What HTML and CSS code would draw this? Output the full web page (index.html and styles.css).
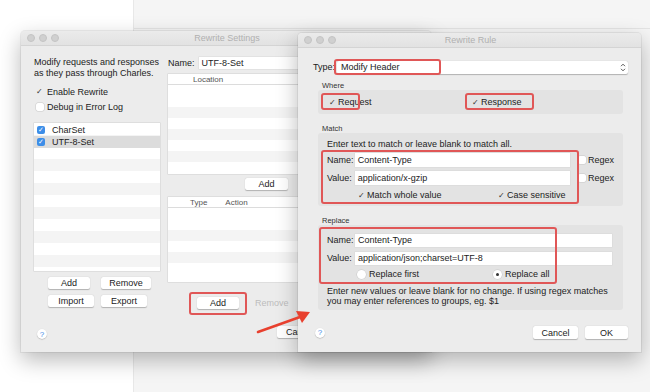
FILE: index.html
```html
<!DOCTYPE html>
<html lang="en">
<head>
    <meta charset="UTF-8">
    <title>Rewrite</title>
    <link rel="stylesheet" href="styles.css">
</head>
<body>
<div class="desk">
    <div class="backdrop"></div>

    <!-- Rewrite Settings window -->
    <div class="win settings">
        <div class="titlebar">
            <div class="lights"><i></i><i></i><i></i></div>
            <div class="title">Rewrite Settings</div>
        </div>
        <div class="set-body">
            <div class="set-left">
                <p class="desc">Modify requests and responses<br>as they pass through Charles.</p>
                <div class="check-row"><span class="tick">&#10003;</span>Enable Rewrite</div>
                <div class="check-row"><span class="box"></span>Debug in Error Log</div>
                <ul class="sets">
                    <li><span class="bluebox">&#10003;</span>CharSet</li>
                    <li class="sel"><span class="bluebox">&#10003;</span>UTF-8-Set</li>
                    <li></li><li></li><li></li><li></li><li></li><li></li><li></li><li></li><li></li><li></li>
                </ul>
                <div class="btn-grid">
                    <span class="btn w42">Add</span>
                    <span class="btn w50">Remove</span>
                    <span class="btn w46">Import</span>
                    <span class="btn w46">Export</span>
                </div>
                <span class="help">?</span>
            </div>
            <div class="set-right">
                <div class="name-row"><label>Name:</label><span class="field">UTF-8-Set</span></div>
                <div class="table t-loc">
                    <div class="thead"><span class="th-loc">Location</span></div>
                    <div class="rows"><i></i><i></i><i></i><i></i><i></i><i></i><i></i><i></i></div>
                </div>
                <div class="add-row"><span class="btn w43">Add</span></div>
                <div class="table t-act">
                    <div class="thead"><span class="th-type">Type</span><span class="th-act">Action</span></div>
                    <div class="rows"><i></i><i></i><i></i><i></i><i></i><i></i></div>
                </div>
                <div class="act-btns">
                    <span class="btn w42">Add</span>
                    <span class="btn-off">Remove</span>
                </div>
                <div class="foot-right"><span class="btn w46">Cancel</span></div>
            </div>
        </div>
    </div>

    <!-- Rewrite Rule dialog -->
    <div class="win rule">
        <div class="titlebar">
            <div class="lights"><i></i><i></i><i></i></div>
            <div class="title">Rewrite Rule</div>
        </div>
        <div class="rule-body">
            <div class="type-row">
                <label>Type:</label>
                <div class="select">Modify Header<span class="updown">
                    <svg width="6" height="9" viewBox="0 0 6 9"><path d="M1 3.2 L3 1.2 L5 3.2 M1 5.8 L3 7.8 L5 5.8" fill="none" stroke="#444" stroke-width="0.9"/></svg>
                </span></div>
            </div>

            <div class="grp-label">Where</div>
            <div class="group where">
                <div class="where-item"><span class="tick">&#10003;</span>Request</div>
                <div class="where-item"><span class="tick">&#10003;</span>Response</div>
            </div>

            <div class="grp-label">Match</div>
            <div class="group match">
                <p class="note">Enter text to match or leave blank to match all.</p>
                <div class="frow"><label>Name:</label><span class="field f-match">Content-Type</span><span class="box"></span><span>Regex</span></div>
                <div class="frow"><label>Value:</label><span class="field f-match">application/x-gzip</span><span class="box"></span><span>Regex</span></div>
                <div class="opt-row">
                    <span class="opt o1"><span class="tick">&#10003;</span>Match whole value</span>
                    <span class="opt"><span class="tick">&#10003;</span>Case sensitive</span>
                </div>
            </div>

            <div class="grp-label">Replace</div>
            <div class="group replace">
                <div class="frow"><label>Name:</label><span class="field f-rep">Content-Type</span></div>
                <div class="frow"><label>Value:</label><span class="field f-rep">application/json;charset=UTF-8</span></div>
                <div class="opt-row radios">
                    <span class="opt o1"><span class="radio"></span>Replace first</span>
                    <span class="opt"><span class="radio on"></span>Replace all</span>
                </div>
                <p class="note">Enter new values or leave blank for no change. If using regex matches<br>you may enter references to groups, eg. $1</p>
            </div>

            <div class="rule-foot">
                <span class="help">?</span>
                <div class="foot-btns">
                    <span class="btn w45">Cancel</span>
                    <span class="btn w43">OK</span>
                </div>
            </div>
        </div>
    </div>

    <!-- red annotations -->
    <div class="mark m-add"></div>
    <div class="mark m-type"></div>
    <div class="mark m-req"></div>
    <div class="mark m-resp"></div>
    <div class="mark m-match"></div>
    <div class="mark m-rep"></div>
    <svg class="arrow" width="60" height="30" viewBox="0 0 60 30">
        <path d="M2 26 L44 11" stroke="#e8402e" stroke-width="2.6" stroke-linecap="round"/>
        <path d="M54 6 L40 5 L46 17 Z" fill="#e8402e"/>
    </svg>
</div>
</body>
</html>
```

FILE: styles.css
```css
* {
    margin: 0;
    padding: 0;
    box-sizing: border-box;
}

body {
    width: 650px;
    height: 392px;
    background: #fff;
    font-family: "Liberation Sans", Arial, sans-serif;
    font-size: 9px;
    color: #222;
    overflow: hidden;
}

ul {
    list-style: none;
}

.desk {
    position: relative;
    width: 650px;
    height: 392px;
}

.backdrop {
    position: absolute;
    left: 133px;
    top: 0;
    right: 0;
    bottom: 0;
    background: #f5f5f5;
    border-left: 1px solid #e8e8e8;
}

.backdrop::before {
    content: "";
    display: block;
    height: 28px;
    border-bottom: 1px solid #e4e4e4;
}

/* windows */
.win {
    position: absolute;
    background: #ececec;
    border-radius: 4px 4px 0 0;
    box-shadow: 0 8px 22px rgba(0, 0, 0, 0.28), 0 0 0 1px rgba(0, 0, 0, 0.06);
    overflow: hidden;
}

.settings {
    left: 21px;
    top: 31px;
    width: 410px;
    height: 321px;
}

.rule {
    left: 298px;
    top: 33px;
    width: 343px;
    height: 319px;
}

.titlebar {
    height: 15px;
    background: linear-gradient(#ebebeb, #e2e2e2);
    border-bottom: 1px solid #d4d4d4;
    display: flex;
    align-items: center;
    position: relative;
}

.lights {
    display: flex;
    gap: 4px;
    padding-left: 6px;
}

.lights i {
    width: 8px;
    height: 8px;
    border-radius: 50%;
    background: #d0d0d0;
    border: 1px solid #c4c4c4;
}

.title {
    flex: 1;
    text-align: center;
    color: #b0b0b0;
    font-size: 9px;
    margin-left: -36px;
}

/* buttons */
.btn {
    display: inline-flex;
    align-items: center;
    justify-content: center;
    height: 12px;
    background: #fff;
    border-radius: 2px;
    box-shadow: 0 0.5px 1px rgba(0, 0, 0, 0.25);
    font-size: 9px;
}

.w42 { width: 42px; }
.w43 { width: 43px; }
.w45 { width: 45px; }
.w46 { width: 46px; }
.w50 { width: 50px; }

.btn-off {
    color: #bcbcbc;
}

.help {
    width: 10px;
    height: 10px;
    border-radius: 50%;
    background: #fff;
    box-shadow: 0 0.5px 1px rgba(0, 0, 0, 0.3);
    color: #3d8ee8;
    font-size: 8px;
    display: flex;
    align-items: center;
    justify-content: center;
}

.tick {
    width: 9px;
    font-size: 8px;
    color: #333;
    display: inline-block;
}

.box {
    width: 8px;
    height: 8px;
    background: #fff;
    border-radius: 2px;
    box-shadow: 0 0 0 0.5px #c8c8c8;
    display: inline-block;
}

/* settings window */
.set-body {
    display: flex;
    gap: 8px;
    padding: 11px 0 0 13px;
}

.set-left {
    width: 126px;
    display: flex;
    flex-direction: column;
}

.desc {
    line-height: 11px;
}

.check-row {
    display: flex;
    align-items: center;
    gap: 2px;
    height: 15px;
    padding-left: 2px;
}

.check-row:nth-of-type(1) {
    margin-top: 5px;
}

.check-row .box {
    margin-right: 1px;
}

.sets {
    margin-top: 9px;
    height: 148px;
    background: repeating-linear-gradient(#fff 0 12px, #f4f4f4 12px 24px);
    box-shadow: 0 0 0 0.5px #d0d0d0;
    padding-top: 1px;
    overflow: hidden;
}

.sets li {
    height: 12px;
    display: flex;
    align-items: center;
    padding-left: 3px;
    gap: 7px;
}

.sets li.sel {
    background: #dcdcdc;
}

.bluebox {
    width: 8px;
    height: 8px;
    border-radius: 2px;
    background: #3d8ee8;
    color: #fff;
    font-size: 7px;
    display: flex;
    align-items: center;
    justify-content: center;
}

.btn-grid {
    display: grid;
    grid-template-columns: auto auto;
    justify-content: start;
    gap: 6px 7px;
    margin: 6px 0 0 14px;
}

.set-left .help {
    margin: 22px 0 0 3px;
}

.set-right {
    width: 250px;
    display: flex;
    flex-direction: column;
}

.name-row {
    display: flex;
    align-items: center;
    height: 12px;
    gap: 4px;
}

.field {
    height: 12px;
    background: #fff;
    display: flex;
    align-items: center;
    padding-left: 3px;
    box-shadow: 0 0 0 0.5px #d8d8d8;
}

.name-row .field {
    flex: 1;
}

.table {
    background: #fff;
    box-shadow: 0 0 0 0.5px #cfcfcf;
}

.thead {
    height: 11px;
    border-bottom: 1px solid #dcdcdc;
    font-size: 8px;
    color: #555;
    display: flex;
    align-items: center;
}

.th-loc { margin-left: 25px; }
.th-type { margin-left: 22px; }
.th-act { margin-left: 18px; }

.rows i {
    display: block;
    height: 11px;
}

.rows i:nth-child(odd) {
    background: #f4f4f4;
}

.rows i:nth-child(1) {
    background: #fff;
}

.t-loc {
    margin-top: 5px;
    height: 100px;
}

.add-row {
    margin: 4px 0 0 77px;
}

.t-act {
    margin-top: 7px;
    height: 85px;
}

.act-btns {
    display: flex;
    align-items: center;
    gap: 16px;
    margin: 15px 0 0 29px;
}

.foot-right {
    margin: 17px 0 0 109px;
}

/* rule dialog */
.rule-body {
    padding: 0 13px 0 15px;
}

.type-row {
    display: flex;
    align-items: center;
    margin-top: 12px;
    height: 14px;
    gap: 2px;
}

.select {
    flex: 1;
    height: 13px;
    background: #fff;
    border-radius: 2px;
    box-shadow: 0 0.5px 1px rgba(0, 0, 0, 0.25);
    display: flex;
    align-items: center;
    padding-left: 4px;
}

.updown {
    margin-left: auto;
    margin-right: 2px;
    display: flex;
}

.grp-label {
    font-size: 7.5px;
    line-height: 9px;
    padding-left: 9px;
    margin-top: 7px;
    color: #333;
}

.group {
    margin: 0 5px;
    background: #e3e3e3;
    border-radius: 3px;
    padding: 0 9px;
}

.where {
    height: 24px;
    display: flex;
    align-items: center;
}

.where-item {
    display: flex;
    align-items: center;
    width: 143px;
    padding-left: 2px;
}

.where + .grp-label,
.match + .grp-label {
    margin-top: 10px;
}

.match {
    height: 73px;
    padding-top: 6px;
}

.note {
    line-height: 10px;
}

.frow {
    display: flex;
    align-items: center;
    height: 14px;
    margin-top: 4px;
}

.frow label {
    width: 28px;
}

.f-match {
    width: 217px;
    height: 14px;
    margin-right: 8px;
}

.frow .box {
    margin-right: 2px;
}

.f-rep {
    width: 257px;
    height: 13px;
}

.opt-row {
    display: flex;
    align-items: center;
    height: 12px;
    margin-top: 4px;
    padding-left: 31px;
}

.opt {
    display: flex;
    align-items: center;
}

.opt.o1 {
    width: 140px;
}

.replace {
    height: 85px;
    padding-top: 8px;
}

.replace .frow:nth-child(2) {
    margin-top: 4px;
}

.replace .frow:first-child {
    margin-top: 0;
}

.radios {
    margin-top: 3px;
    padding-left: 30px;
}

.radio {
    width: 9px;
    height: 9px;
    border-radius: 50%;
    background: #fff;
    box-shadow: 0 0 0 0.5px #c8c8c8;
    margin-right: 3px;
    display: flex;
    align-items: center;
    justify-content: center;
}

.radio.on::after {
    content: "";
    width: 3px;
    height: 3px;
    border-radius: 50%;
    background: #333;
}

.radios .opt.o1 {
    width: 136px;
}

.replace .note {
    margin-top: 6px;
}

.rule-foot {
    display: flex;
    align-items: center;
    margin-top: 16px;
    padding-left: 2px;
}

.foot-btns {
    margin-left: auto;
    display: flex;
    gap: 7px;
}

.foot-btns .btn {
    height: 13px;
}

/* annotations */
.mark {
    position: absolute;
    border: 2px solid #e05757;
    border-radius: 3px;
}

.m-add { left: 189px; top: 292px; width: 58px; height: 23px; }
.m-type { left: 334px; top: 59px; width: 107px; height: 16px; }
.m-req { left: 321px; top: 93px; width: 39px; height: 17px; }
.m-resp { left: 465px; top: 93px; width: 69px; height: 17px; }
.m-match { left: 321px; top: 150px; width: 258px; height: 54px; }
.m-rep { left: 319px; top: 227px; width: 238px; height: 57px; }

.arrow {
    position: absolute;
    left: 256px;
    top: 306px;
}
```
